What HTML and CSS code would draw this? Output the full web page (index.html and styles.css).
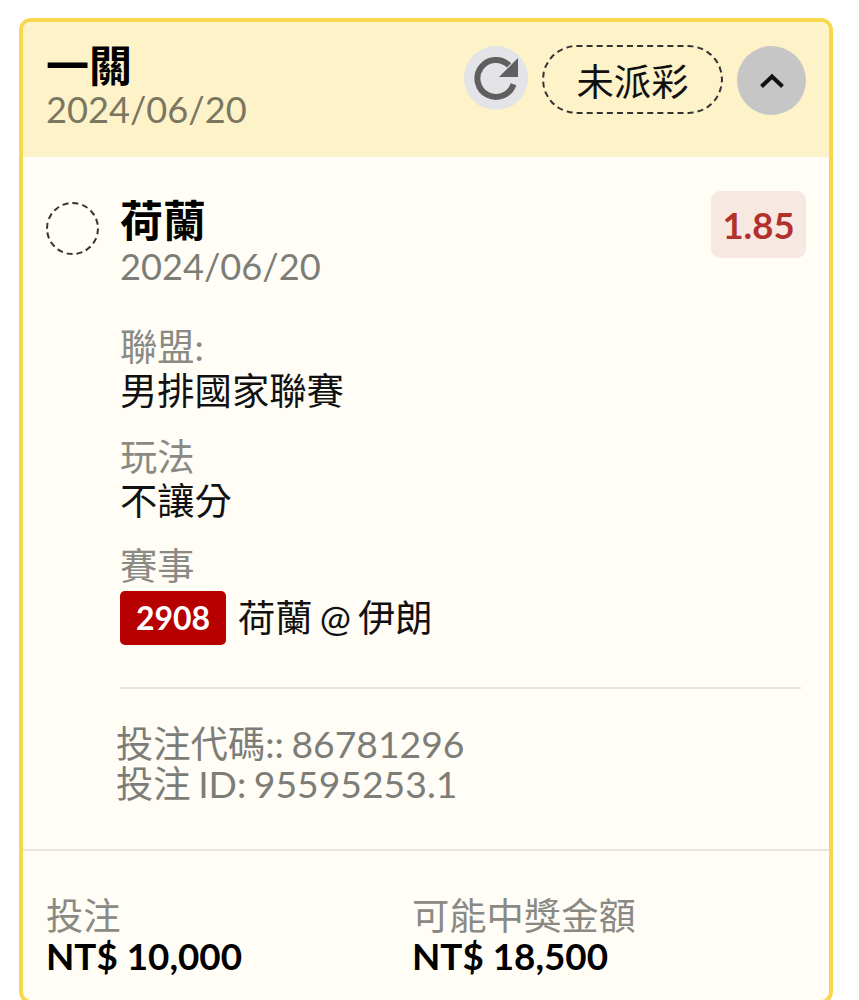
FILE: index.html
```html
<!DOCTYPE html>
<html lang="zh-Hant">
<head>
    <meta charset="UTF-8">
    <meta name="viewport" content="width=device-width, initial-scale=1.0">
    <title>一關</title>
    <link rel="stylesheet" href="styles.css">
</head>
<body>

<div class="card">
    <div class="card-header">
        <div class="header-title">
            <div class="title">一關</div>
            <div class="date">2024/06/20</div>
        </div>
        <div class="header-actions">
            <button class="refresh-btn" aria-label="refresh">
                <svg width="44" height="44" viewBox="0 0 44 44">
                    <path d="M39.5 28.2A18.5 18.5 0 1 1 35 9.3" fill="none" stroke="#5f5f5f" stroke-width="6"/>
                    <path d="M25 21L44 21L44 2Z" fill="#5f5f5f"/>
                </svg>
            </button>
            <div class="status-pill">未派彩</div>
            <button class="toggle-btn" aria-label="collapse">
                <svg width="26" height="16" viewBox="0 0 26 16">
                    <path d="M2.5 13.5L13 3.5L23.5 13.5" fill="none" stroke="#111" stroke-width="4"/>
                </svg>
            </button>
        </div>
    </div>

    <div class="card-body">
        <div class="selection">
            <div class="radio"></div>
            <div class="selection-main">
                <div class="selection-top">
                    <div>
                        <div class="title">荷蘭</div>
                        <div class="date muted">2024/06/20</div>
                    </div>
                    <div class="odds">1.85</div>
                </div>

                <div class="field">
                    <div class="field-label">聯盟:</div>
                    <div class="field-value">男排國家聯賽</div>
                </div>
                <div class="field">
                    <div class="field-label">玩法</div>
                    <div class="field-value">不讓分</div>
                </div>
                <div class="field">
                    <div class="field-label">賽事</div>
                    <div class="field-value match">
                        <span class="match-no">2908</span>
                        <span class="match-name">荷蘭 @ 伊朗</span>
                    </div>
                </div>
            </div>
        </div>

        <div class="codes">
            <div>投注代碼:: 86781296</div>
            <div>投注 ID: 95595253.1</div>
        </div>
    </div>

    <div class="card-footer">
        <div class="amount">
            <div class="amount-label">投注</div>
            <div class="amount-value">NT$ 10,000</div>
        </div>
        <div class="amount">
            <div class="amount-label">可能中獎金額</div>
            <div class="amount-value">NT$ 18,500</div>
        </div>
    </div>
</div>

</body>
</html>
```

FILE: styles.css
```css
body {
    font-family: Lato, "Noto Sans CJK TC", sans-serif;
    background-color: #fff;
    color: #111;
    margin: 0;
    padding: 18px 26px 0 19px;
    height: 1000px;
    box-sizing: border-box;
    overflow: hidden;
}
button {
    border: none;
    padding: 0;
    display: flex;
    align-items: center;
    justify-content: center;
    border-radius: 50%;
}
.card {
    height: 986px;
    box-sizing: border-box;
    border: 4px solid #f8d74c;
    border-radius: 12px;
    background: #fffdf6;
    overflow: hidden;
}
.card-header {
    height: 135px;
    box-sizing: border-box;
    padding: 21px 23px 0 23px;
    background: #fef2c9;
    display: flex;
    justify-content: space-between;
    align-items: flex-start;
}
.title {
    font-size: 43px;
    font-weight: 700;
    line-height: 46px;
    color: #000;
}
.date {
    font-size: 36.2px;
    line-height: 40px;
    color: #7a7660;
}
.date.muted {
    color: #7d7d78;
}
.header-actions {
    display: flex;
    align-items: flex-start;
    gap: 14px;
    margin-top: 3px;
}
.refresh-btn {
    width: 64px;
    height: 64px;
    background: #e3e4e8;
}
.status-pill {
    width: 181px;
    height: 69px;
    margin-top: -1px;
    box-sizing: border-box;
    border: 2px dashed #333;
    border-radius: 35px;
    display: flex;
    align-items: center;
    justify-content: center;
    font-size: 37.3px;
}
.toggle-btn {
    width: 69px;
    height: 69px;
    background: #c6c6c6;
}
.card-body {
    height: 694px;
    box-sizing: border-box;
    padding: 34px 23px 0 23px;
    border-bottom: 2px solid #e6e5e0;
}
.selection {
    display: flex;
    gap: 21px;
}
.radio {
    width: 53px;
    height: 53px;
    box-sizing: border-box;
    border: 2px dashed #333;
    border-radius: 50%;
    margin-top: 11px;
    flex-shrink: 0;
}
.selection-main {
    flex: 1;
    padding-bottom: 42px;
    border-bottom: 2px solid #e6e5e0;
    margin-right: 5px;
}
.selection-top {
    display: flex;
    justify-content: space-between;
    align-items: flex-start;
    margin-right: -5px;
    margin-bottom: 40px;
}
.selection-top .title {
    margin-top: 7px;
    margin-bottom: 2px;
}
.odds {
    width: 95px;
    height: 67px;
    border-radius: 9px;
    background: #f8e8e2;
    color: #b1322c;
    font-size: 36.5px;
    font-weight: 700;
    display: flex;
    align-items: center;
    justify-content: center;
}
.field {
    margin-bottom: 21.5px;
}
.field:last-child {
    margin-bottom: 0;
}
.field-label {
    font-size: 37.3px;
    line-height: 42px;
    color: #8a8a85;
}
.field-value {
    font-size: 37.3px;
    line-height: 46px;
    color: #111;
}
.match {
    display: flex;
    align-items: center;
    gap: 12px;
    margin-top: 4px;
}
.match-no {
    width: 106px;
    height: 54px;
    border-radius: 5px;
    background: #b70000;
    color: #fff;
    font-size: 32px;
    font-weight: 700;
    display: flex;
    align-items: center;
    justify-content: center;
}
.match-name {
    word-spacing: -2.5px;
}
.codes {
    margin: 35px 0 0 70px;
    font-size: 37.3px;
    line-height: 40px;
    word-spacing: -2px;
    color: #7d7d78;
}
.card-footer {
    display: flex;
    padding: 44px 23px 0;
}
.amount {
    width: 366px;
}
.amount-label {
    font-size: 37.3px;
    line-height: 42px;
    color: #8a8a85;
}
.amount-value {
    font-size: 36.8px;
    font-weight: 700;
    line-height: 39px;
    color: #000;
}
```
